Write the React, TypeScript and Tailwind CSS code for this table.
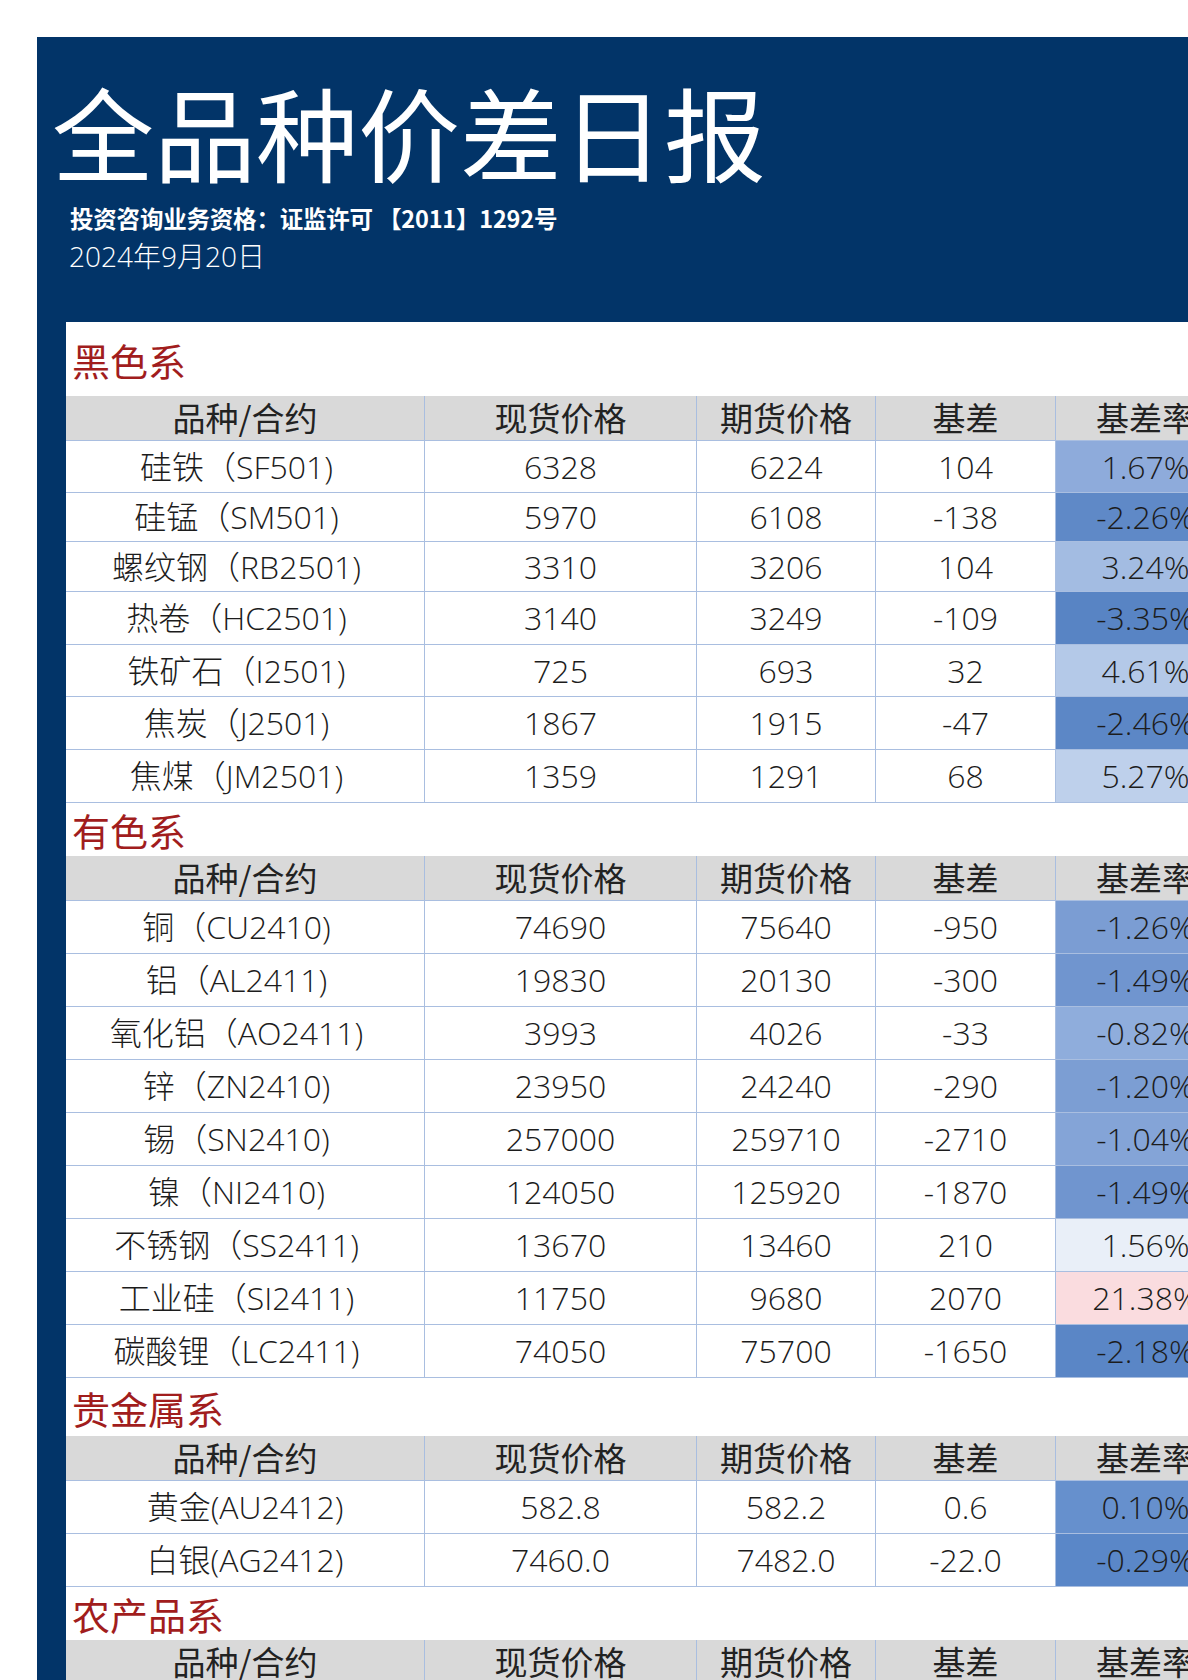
import React from 'react';

type Row = { name: string; spot: string; fut: string; basis: string; rate: string; bg: string; h: string };

type Section = { title: string; titleH: string; rows: Row[] };

const sections: Section[] = [
  {
    title: '黑色系',
    titleH: 'h-[74px]',
    rows: [
      { name: '硅铁（SF501)', spot: '6328', fut: '6224', basis: '104', rate: '1.67%', bg: 'bg-[#8eabdb]', h: 'h-[52px]' },
      { name: '硅锰（SM501)', spot: '5970', fut: '6108', basis: '-138', rate: '-2.26%', bg: 'bg-[#5f89c7]', h: 'h-[49px]' },
      { name: '螺纹钢（RB2501)', spot: '3310', fut: '3206', basis: '104', rate: '3.24%', bg: 'bg-[#a3bce2]', h: 'h-[50px]' },
      { name: '热卷（HC2501)', spot: '3140', fut: '3249', basis: '-109', rate: '-3.35%', bg: 'bg-[#5884c4]', h: 'h-[53px]' },
      { name: '铁矿石（I2501)', spot: '725', fut: '693', basis: '32', rate: '4.61%', bg: 'bg-[#b4c9e8]', h: 'h-[52px]' },
      { name: '焦炭（J2501)', spot: '1867', fut: '1915', basis: '-47', rate: '-2.46%', bg: 'bg-[#5c87c6]', h: 'h-[53px]' },
      { name: '焦煤（JM2501)', spot: '1359', fut: '1291', basis: '68', rate: '5.27%', bg: 'bg-[#bed0eb]', h: 'h-[53px]' },
    ],
  },
  {
    title: '有色系',
    titleH: 'h-[53px]',
    rows: [
      { name: '铜（CU2410)', spot: '74690', fut: '75640', basis: '-950', rate: '-1.26%', bg: 'bg-[#7b9dd3]', h: 'h-[53px]' },
      { name: '铝（AL2411)', spot: '19830', fut: '20130', basis: '-300', rate: '-1.49%', bg: 'bg-[#7095cf]', h: 'h-[53px]' },
      { name: '氧化铝（AO2411)', spot: '3993', fut: '4026', basis: '-33', rate: '-0.82%', bg: 'bg-[#8faddc]', h: 'h-[53px]' },
      { name: '锌（ZN2410)', spot: '23950', fut: '24240', basis: '-290', rate: '-1.20%', bg: 'bg-[#7c9ed3]', h: 'h-[53px]' },
      { name: '锡（SN2410)', spot: '257000', fut: '259710', basis: '-2710', rate: '-1.04%', bg: 'bg-[#84a4d7]', h: 'h-[53px]' },
      { name: '镍（NI2410)', spot: '124050', fut: '125920', basis: '-1870', rate: '-1.49%', bg: 'bg-[#7095cf]', h: 'h-[53px]' },
      { name: '不锈钢（SS2411)', spot: '13670', fut: '13460', basis: '210', rate: '1.56%', bg: 'bg-[#e9eff8]', h: 'h-[53px]' },
      { name: '工业硅（SI2411)', spot: '11750', fut: '9680', basis: '2070', rate: '21.38%', bg: 'bg-[#fadcdf]', h: 'h-[53px]' },
      { name: '碳酸锂（LC2411)', spot: '74050', fut: '75700', basis: '-1650', rate: '-2.18%', bg: 'bg-[#5a86c6]', h: 'h-[53px]' },
    ],
  },
  {
    title: '贵金属系',
    titleH: 'h-[58px]',
    rows: [
      { name: '黄金(AU2412)', spot: '582.8', fut: '582.2', basis: '0.6', rate: '0.10%', bg: 'bg-[#6690cd]', h: 'h-[53px]' },
      { name: '白银(AG2412)', spot: '7460.0', fut: '7482.0', basis: '-22.0', rate: '-0.29%', bg: 'bg-[#5a87c8]', h: 'h-[53px]' },
    ],
  },
  { title: '农产品系', titleH: 'h-[53px]', rows: [] },
];

const cell = 'flex items-center justify-center border-r border-[#a9bee0] shrink-0';

function HeaderRow() {
  return (
    <div className="flex h-[45px] bg-[#d9d9d9] border-b border-[#a9bee0] text-[33px] font-normal text-[#222] [font-family:'Noto_Sans_CJK_SC',sans-serif]">
      <div className={`${cell} w-[359px]`}>品种/合约</div>
      <div className={`${cell} w-[272px]`}>现货价格</div>
      <div className={`${cell} w-[179px]`}>期货价格</div>
      <div className={`${cell} w-[180px]`}>基差</div>
      <div className={`${cell} w-[180px]`}>基差率</div>
    </div>
  );
}

export default function App() {
  return (
    <div className="w-[1188px] h-[1680px] overflow-hidden bg-white pt-[37px] pl-[37px] [font-family:'Open_Sans','Noto_Sans_CJK_SC',sans-serif]">
      <div className="h-full bg-[#023468] flex flex-col">
        <div className="pt-[43px] h-[285px] shrink-0">
          <h1 className="pl-[15px] text-[102px] leading-none text-white font-normal [font-family:'Noto_Sans_CJK_SC',sans-serif]">
            全品种价差日报
          </h1>
          <p className="mt-[24px] pl-[33px] text-[23.5px] leading-[24px] tracking-[-0.2px] font-bold text-white [font-family:'Noto_Sans_CJK_SC',sans-serif]">
            投资咨询业务资格：证监许可 【2011】1292号
          </p>
          <p className="mt-[12px] pl-[32px] text-[28px] leading-[28px] font-light text-white">2024年9月20日</p>
        </div>
        <div className="ml-[29px] flex-1 bg-white text-[32px] font-light text-[#1c1c1c]">
          {sections.map((s) => (
            <div key={s.title}>
              <div className={`${s.titleH} flex items-center pl-[6px] text-[38px] font-normal text-[#a11d1d] [font-family:'Noto_Sans_CJK_SC',sans-serif]`}>
                {s.title}
              </div>
              <HeaderRow />
              {s.rows.map((r) => (
                <div key={r.name} className={`flex ${r.h} border-b border-[#a9bee0]`}>
                  <div className={`${cell} w-[359px] ${r.name.includes('（') ? 'pr-[17px]' : ''}`}>{r.name}</div>
                  <div className={`${cell} w-[272px]`}>{r.spot}</div>
                  <div className={`${cell} w-[179px]`}>{r.fut}</div>
                  <div className={`${cell} w-[180px]`}>{r.basis}</div>
                  <div className={`${cell} w-[180px] ${r.bg}`}>{r.rate}</div>
                </div>
              ))}
            </div>
          ))}
        </div>
      </div>
    </div>
  );
}
